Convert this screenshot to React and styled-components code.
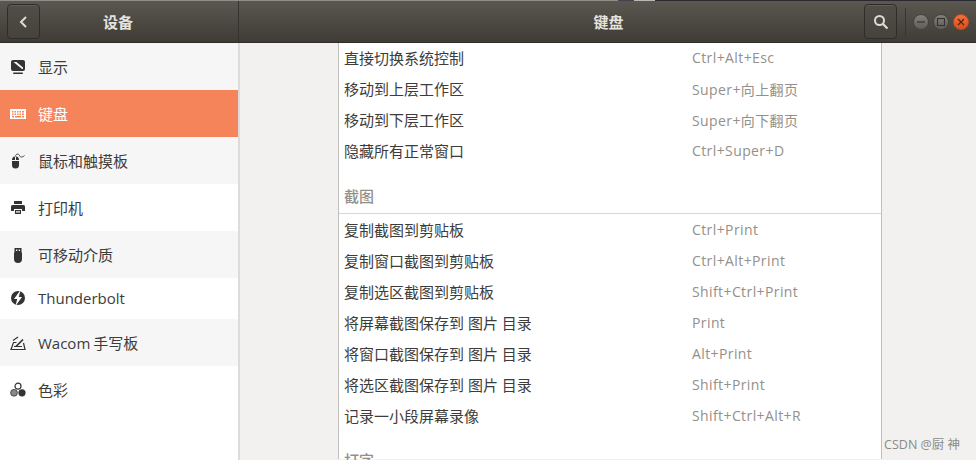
import React from 'react';
import styled, { createGlobalStyle } from 'styled-components';

const Global = createGlobalStyle`
  html, body { margin: 0; padding: 0; width: 976px; height: 460px; overflow: hidden; background: #f2f1ef; }
  #root { width: 976px; height: 460px; }
  * { box-sizing: border-box; }
`;

const Window = styled.div`
  position: relative;
  width: 976px;
  height: 460px;
  display: grid;
  grid-template-rows: 43px 1fr;
  overflow: hidden;
  font-family: "Open Sans", "Noto Sans CJK SC", sans-serif;
  font-size: 15px;
  color: #3d3c3a;
`;

const HeaderBar = styled.header`
  display: grid;
  grid-template-columns: 239px 1fr;
  padding-top: 1px;
  background:
    linear-gradient(to right, #8f8e86 618px, #44424f 618px, #44424f 634px, #b9b8b2 634px, #b9b8b2 655px, #2a2a30 655px) top / 100% 1px no-repeat,
    linear-gradient(#5b5851, #3f3c36);
  border-bottom: 1px solid #2f2d29;
`;

const HeaderLeft = styled.div`
  display: flex;
  align-items: center;
  position: relative;
  padding-left: 7px;
  border-right: 1px solid #35332e;
`;

const HeaderRight = styled.div`
  display: flex;
  align-items: center;
  position: relative;
  padding-right: 7px;
  justify-content: flex-end;
`;

const Title = styled.div`
  position: absolute;
  left: 0;
  right: 0;
  top: 0;
  bottom: 0;
  display: flex;
  align-items: center;
  justify-content: center;
  color: #e6e3de;
  font-weight: 700;
  font-size: 15px;
  padding-left: ${p => p.$pl || 0}px;
  padding-right: ${p => p.$pr || 0}px;
`;

const HeaderButton = styled.button`
  position: relative;
  z-index: 1;
  width: 33px;
  height: 35px;
  padding: 0;
  display: flex;
  align-items: center;
  justify-content: center;
  background: linear-gradient(#514e48, #46433d);
  border: 1px solid #2f2d29;
  border-radius: 4px;
  box-shadow: inset 0 1px 0 #5f5c55;
`;

const Divider = styled.div`
  position: relative;
  z-index: 1;
  width: 1px;
  height: 28px;
  margin: 0 7px 0 8px;
  background: #37352f;
`;

const WinControls = styled.div`
  position: relative;
  z-index: 1;
  display: flex;
  gap: 4px;
`;

const WinButton = styled.div`
  width: 16px;
  height: 16px;
  border-radius: 50%;
  display: flex;
  align-items: center;
  justify-content: center;
  border: 1px solid ${p => (p.$close ? '#c24d20' : '#45433e')};
  background: ${p => (p.$close ? 'linear-gradient(#f2703f, #dc4d1c)' : 'linear-gradient(#84817b, #5f5c56)')};
`;

const Body = styled.div`
  display: grid;
  grid-template-columns: 238px 1fr;
  min-height: 0;
`;

const Sidebar = styled.nav`
  background: #fff;
`;

const SideRow = styled.div`
  height: ${p => p.$h || 47}px;
  display: flex;
  align-items: center;
  padding-left: 10px;
  padding-bottom: ${p => (p.$h ? 1 : 0)}px;
  gap: 12px;
  word-spacing: -1px;
  background: ${p => (p.$active ? '#f5845a' : p.$odd ? '#f6f6f6' : '#fff')};
  color: ${p => (p.$active ? '#fff' : '#3d3c3a')};
`;

const SideIcon = styled.svg`
  width: 16px;
  height: 16px;
  flex: none;
  color: ${p => (p.$active ? '#fff' : '#333')};
`;

const Main = styled.main`
  border-left: 2px solid #dedcd9;
  background: #f2f1ef;
  padding-left: 98px;
  min-height: 0;
  overflow: hidden;
`;

const Panel = styled.section`
  width: 544px;
  height: 100%;
  background: #fff;
  border-left: 1px solid #c0bebb;
  border-right: 1px solid #c0bebb;
`;

const FirstGroup = styled.div`
  margin-top: -1px;
`;

const Row = styled.div`
  height: 31px;
  display: grid;
  grid-template-columns: 348px 1fr;
  align-items: center;
  padding-left: 5px;
  font-size: 15px;
`;

const Keys = styled.span`
  color: #93908a;
  font-size: 14px;
  letter-spacing: 0.4px;
`;

const GroupTitle = styled.div`
  height: ${p => p.$h}px;
  display: flex;
  align-items: flex-end;
  padding: 0 0 7px 5px;
  color: #93908a;
  font-weight: 500;
  font-size: 15px;
  border-bottom: 1px solid ${p => (p.$plain ? 'transparent' : '#d9d7d4')};
`;

const Watermark = styled.div`
  position: absolute;
  right: 16px;
  bottom: 7px;
  color: #8a8a88;
  font-size: 12.5px;
`;

const icons = {
  display: (
    <>
      <path fillRule="evenodd" fill="currentColor" d="M3 1h10a2 2 0 0 1 2 2v7a2 2 0 0 1-2 2H3a2 2 0 0 1-2-2V3a2 2 0 0 1 2-2zm.5 2 8.500 7H13V8.500L6.500 3z" />
      <rect x="3" y="13.500" width="10" height="1.500" rx="0.700" fill="currentColor" />
    </>
  ),
  keyboard: (
    <path fillRule="evenodd" fill="currentColor" d="M0 3h16v10H0zM2 5v1.500h1.500V5zm2.500 0v1.500H6V5zM7 5v1.500h1.500V5zm2.500 0v1.500H11V5zM12 5v1.500h2V5zM2 7.500V9h1.500V7.500zm2.500 0V9H6V7.500zm2.500 0V9h1.500V7.500zm2.500 0V9H11V7.500zm2.500 0V9h2V7.500zM2 10v1.500h2V10zm3 0v1.500h6V10zm7 0v1.500h2V10z" />
  ),
  mouse: (
    <>
      <path fill="currentColor" d="M2 7a3.500 3.500 0 0 1 3-3.400V7H2zm4-3.400A3.500 3.500 0 0 1 9 7H6zM2 8h7v4a3.500 3.500 0 0 1-7 0z" />
      <path fill="none" stroke="currentColor" strokeWidth="0.900" d="M5.500 3.500C5.500 0.500 9 0.500 9.500 2.500S12.500 4.500 14.500 2.500" />
    </>
  ),
  printer: (
    <path fillRule="evenodd" fill="currentColor" d="M4 1h8v3H4zM2.500 5h11A1.500 1.500 0 0 1 15 6.500V11h-3V9H4v2H1V6.500A1.500 1.500 0 0 1 2.500 5zM5 10h6v4H5zm1 1v.8h4V11zm0 1.500v.6h4v-.6z" />
  ),
  usb: (
    <path fillRule="evenodd" fill="currentColor" d="M4.500 1h7v4.500h.5V12a4 4 0 0 1-8 0V5.500h.5zM6 2.500V4h1.300V2.500zm2.700 0V4H10V2.500z" />
  ),
  bolt: (
    <>
      <circle cx="8" cy="8" r="7" fill="currentColor" />
      <path fill="#fff" d="M10.500 0 4 9h3.200L5.500 16 12 7H8.800z" />
    </>
  ),
  tablet: (
    <>
      <path fill="none" stroke="currentColor" strokeWidth="1.200" d="M6.500 7.500H3.500L1 14.500h14L13.500 8" />
      <path fill="none" stroke="currentColor" strokeWidth="1.700" d="M6 11.500 13 4.500" />
      <path fill="none" stroke="currentColor" strokeWidth="1.100" d="M3 5.500 8 2M4 11.500h8" />
    </>
  ),
  color: (
    <>
      <circle cx="8" cy="4.200" r="3" fill="#fff" stroke="currentColor" strokeWidth="1.200" />
      <circle cx="4" cy="10.800" r="3.400" fill="#8a8a88" stroke="currentColor" strokeWidth="0.800" />
      <circle cx="12" cy="10.800" r="3.600" fill="currentColor" />
    </>
  ),
};

const sideItems = [
  { icon: 'display', label: '显示', odd: true },
  { icon: 'keyboard', label: '键盘', active: true },
  { icon: 'mouse', label: '鼠标和触摸板', odd: true },
  { icon: 'printer', label: '打印机' },
  { icon: 'usb', label: '可移动介质', odd: true },
  { icon: 'bolt', label: 'Thunderbolt', h: 41 },
  { icon: 'tablet', label: 'Wacom 手写板', odd: true },
  { icon: 'color', label: '色彩' },
];

const group1 = [
  ['直接切换系统控制', 'Ctrl+Alt+Esc'],
  ['移动到上层工作区', 'Super+向上翻页'],
  ['移动到下层工作区', 'Super+向下翻页'],
  ['隐藏所有正常窗口', 'Ctrl+Super+D'],
];

const group2 = [
  ['复制截图到剪贴板', 'Ctrl+Print'],
  ['复制窗口截图到剪贴板', 'Ctrl+Alt+Print'],
  ['复制选区截图到剪贴板', 'Shift+Ctrl+Print'],
  ['将屏幕截图保存到 图片 目录', 'Print'],
  ['将窗口截图保存到 图片 目录', 'Alt+Print'],
  ['将选区截图保存到 图片 目录', 'Shift+Print'],
  ['记录一小段屏幕录像', 'Shift+Ctrl+Alt+R'],
];

const Shortcut = ({ item }) => (
  <Row>
    <span>{item[0]}</span>
    <Keys>{item[1]}</Keys>
  </Row>
);

export default function App() {
  return (
    <Window>
      <Global />
      <HeaderBar>
        <HeaderLeft>
          <HeaderButton aria-label="back">
            <svg width="16" height="16" viewBox="0 0 16 16">
              <path d="M10 3 5 8l5 5" fill="none" stroke="#dedbd5" strokeWidth="2" />
            </svg>
          </HeaderButton>
          <Title $pr={2}>设备</Title>
        </HeaderLeft>
        <HeaderRight>
          <Title $pl={2}>键盘</Title>
          <HeaderButton aria-label="search">
            <svg width="16" height="16" viewBox="0 0 16 16">
              <circle cx="6.500" cy="6.500" r="4.500" fill="none" stroke="#dedbd5" strokeWidth="2" />
              <path d="M10 10l4.500 4.500" stroke="#dedbd5" strokeWidth="2.200" />
            </svg>
          </HeaderButton>
          <Divider />
          <WinControls>
            <WinButton>
              <svg width="10" height="10" viewBox="0 0 10 10"><path d="M1 5h8" stroke="#35332e" strokeWidth="1.200" /></svg>
            </WinButton>
            <WinButton>
              <svg width="10" height="10" viewBox="0 0 10 10"><rect x="1.500" y="1.500" width="7" height="7" fill="none" stroke="#35332e" strokeWidth="1.100" /></svg>
            </WinButton>
            <WinButton $close>
              <svg width="10" height="10" viewBox="0 0 10 10"><path d="M2 2l6 6M8 2l-6 6" stroke="#4a2410" strokeWidth="1.200" /></svg>
            </WinButton>
          </WinControls>
        </HeaderRight>
      </HeaderBar>
      <Body>
        <Sidebar>
          {sideItems.map(it => (
            <SideRow key={it.label} $odd={it.odd} $active={it.active} $h={it.h}>
              <SideIcon viewBox="0 0 16 16" $active={it.active}>{icons[it.icon]}</SideIcon>
              <span>{it.label}</span>
            </SideRow>
          ))}
        </Sidebar>
        <Main>
          <Panel>
            <FirstGroup>
              {group1.map(i => <Shortcut key={i[0]} item={i} />)}
            </FirstGroup>
            <GroupTitle $h={48}>截图</GroupTitle>
            {group2.map(i => <Shortcut key={i[0]} item={i} />)}
            <GroupTitle $h={47} $plain>打字</GroupTitle>
          </Panel>
        </Main>
      </Body>
      <Watermark>CSDN @厨 神</Watermark>
    </Window>
  );
}
